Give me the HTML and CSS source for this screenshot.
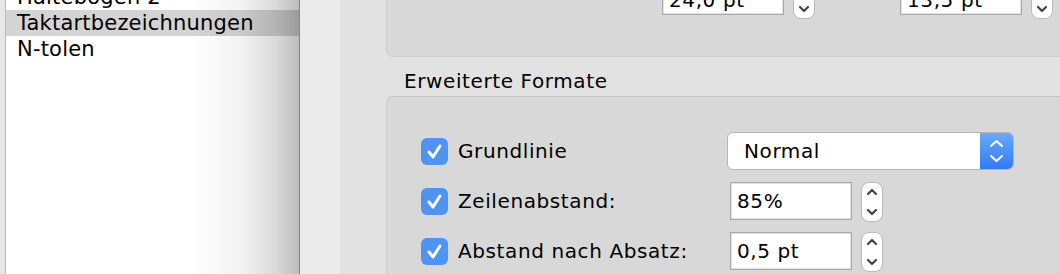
FILE: index.html
```html
<!DOCTYPE html>
<html lang="de">
<head>
  <meta charset="UTF-8" />
  <title>Erweiterte Formate</title>
  <link rel="stylesheet" href="styles.css">
</head>
<body>
<div class="window">
  <div class="sidebar">
    <div class="edge"></div>
    <ul class="list">
      <li>Haltebögen 2</li>
      <li class="sel">Taktartbezeichnungen</li>
      <li>N-tolen</li>
    </ul>
  </div>
  <div class="strip"></div>
  <div class="main">
    <div class="panel panel-top">
      <div class="field">
        <div class="input">24,0 pt</div>
        <div class="stepper">
          <svg width="20" height="38" viewBox="0 0 20 38"><path d="M6 11 L10 7 L14 11" /><path d="M6 27 L10 31 L14 27" /></svg>
        </div>
      </div>
      <div class="field">
        <div class="input">13,5 pt</div>
        <div class="stepper">
          <svg width="20" height="38" viewBox="0 0 20 38"><path d="M6 11 L10 7 L14 11" /><path d="M6 27 L10 31 L14 27" /></svg>
        </div>
      </div>
    </div>

    <div class="heading">Erweiterte Formate</div>

    <div class="panel panel-ext">
      <div class="rows">
        <label class="check"><span class="box"><svg width="27" height="27" viewBox="0 0 27 27"><path d="M8 14 L12 19 L19 8" /></svg></span>Grundlinie</label>
        <div class="popup">
          <span class="popup-text">Normal</span>
          <span class="popup-arrows"><svg width="33" height="36" viewBox="0 0 33 36"><path d="M11 13 L16.5 8 L22 13" /><path d="M11 23 L16.5 28 L22 23" /></svg></span>
        </div>

        <label class="check"><span class="box"><svg width="27" height="27" viewBox="0 0 27 27"><path d="M8 14 L12 19 L19 8" /></svg></span>Zeilenabstand:</label>
        <div class="field inset">
          <div class="input">85%</div>
          <div class="stepper">
            <svg width="20" height="38" viewBox="0 0 20 38"><path d="M6 11 L10 7 L14 11" /><path d="M6 27 L10 31 L14 27" /></svg>
          </div>
        </div>

        <label class="check"><span class="box"><svg width="27" height="27" viewBox="0 0 27 27"><path d="M8 14 L12 19 L19 8" /></svg></span>Abstand nach Absatz:</label>
        <div class="field inset">
          <div class="input">0,5 pt</div>
          <div class="stepper">
            <svg width="20" height="38" viewBox="0 0 20 38"><path d="M6 11 L10 7 L14 11" /><path d="M6 27 L10 31 L14 27" /></svg>
          </div>
        </div>
      </div>
    </div>
  </div>
</div>
</body>
</html>
```

FILE: styles.css
```css
html, body {
  margin: 0;
  padding: 0;
  height: 100%;
  overflow: hidden;
}
body {
  font-family: "DejaVu Sans", "Liberation Sans", sans-serif;
  font-size: 20px;
  letter-spacing: 0.6px;
  color: #000;
  background: #e2e2e2;
}
.window {
  display: flex;
  height: 274px;
}

/* left list */
.sidebar {
  display: flex;
  width: 300px;
  flex-shrink: 0;
}
.edge {
  width: 5px;
  background: #e7e7e7;
  border-right: 1px solid #bcbcbc;
}
.list {
  flex: 1;
  margin: 0;
  padding: 0;
  list-style: none;
  border-right: 1px solid #858585;
  background: linear-gradient(to right, #fff 0, #fff 185px, #f3f3f3 235px, #d9d9d9 270px, #bcbcbc 293px);
  font-size: 21px;
  letter-spacing: 0.2px;
}
.list li {
  height: 26px;
  line-height: 26px;
  padding-left: 11px;
  white-space: nowrap;
}
.list li:first-child {
  margin-top: -16px;
}
.list li.sel {
  background: rgba(0, 0, 0, 0.17);
}

.strip {
  width: 40px;
  flex-shrink: 0;
  background: #ebebeb;
}

/* right side */
.main {
  flex: 1;
  display: flex;
  flex-direction: column;
  padding-left: 46px;
  min-width: 0;
}
.panel {
  background: #d8d8d8;
  border: 1px solid #cdcdcd;
  border-right: none;
  margin-right: -20px;
}
.panel-top {
  margin-top: -30px;
  height: 79px;
  border-top: none;
  border-radius: 0 0 0 7px;
  display: flex;
  align-items: flex-start;
  gap: 85px;
  padding: 7px 0 0 275px;
  box-sizing: content-box;
}
.panel-top .stepper {
  margin-top: 2px;
}
.panel-top .input {
  padding-top: 4px;
}
.heading {
  height: 29px;
  line-height: 29px;
  padding: 10px 0 0 18px;
}
.panel-ext {
  flex: 1;
  border-top-color: #c6c6c6;
  border-bottom: none;
  border-radius: 7px 0 0 0;
  padding: 34px 0 0 34px;
}

.rows {
  display: grid;
  grid-template-columns: 306px auto;
  grid-auto-rows: 40px;
  row-gap: 10px;
  align-items: center;
}
.check {
  display: flex;
  align-items: center;
  gap: 10px;
  white-space: nowrap;
}
.box {
  width: 27px;
  height: 27px;
  border-radius: 6px;
  background: #4f93f3;
  display: flex;
}
.box path {
  fill: none;
  stroke: #fff;
  stroke-width: 3;
  stroke-linecap: round;
  stroke-linejoin: round;
}

.popup {
  width: 287px;
  height: 38px;
  box-sizing: border-box;
  border: 1px solid #b5b5b5;
  border-radius: 6px;
  background: #fff;
  display: flex;
  overflow: hidden;
  justify-self: start;
}
.popup-text {
  flex: 1;
  line-height: 36px;
  padding-left: 16px;
}
.popup-arrows {
  width: 33px;
  background: linear-gradient(#6aa8f9, #2f7cf5);
  display: flex;
}
.popup-arrows path {
  fill: none;
  stroke: #fff;
  stroke-width: 2;
  stroke-linecap: round;
  stroke-linejoin: round;
}

.field {
  display: flex;
  align-items: flex-start;
  gap: 9px;
}
.field.inset {
  margin-left: 3px;
  margin-top: 1px;
}
.input {
  width: 122px;
  height: 38px;
  box-sizing: border-box;
  border: 1px solid #a8a8a8;
  box-shadow: inset 0 0 0 1px #e2e2e2;
  background: #fff;
  line-height: 36px;
  padding: 0 0 0 6px;
  white-space: nowrap;
}
.stepper {
  width: 22px;
  height: 40px;
  box-sizing: border-box;
  border: 1px solid #bababa;
  border-radius: 8px;
  background: #fff;
  display: flex;
}
.stepper path {
  fill: none;
  stroke: #444;
  stroke-width: 2.2;
  stroke-linecap: round;
  stroke-linejoin: round;
}
```
